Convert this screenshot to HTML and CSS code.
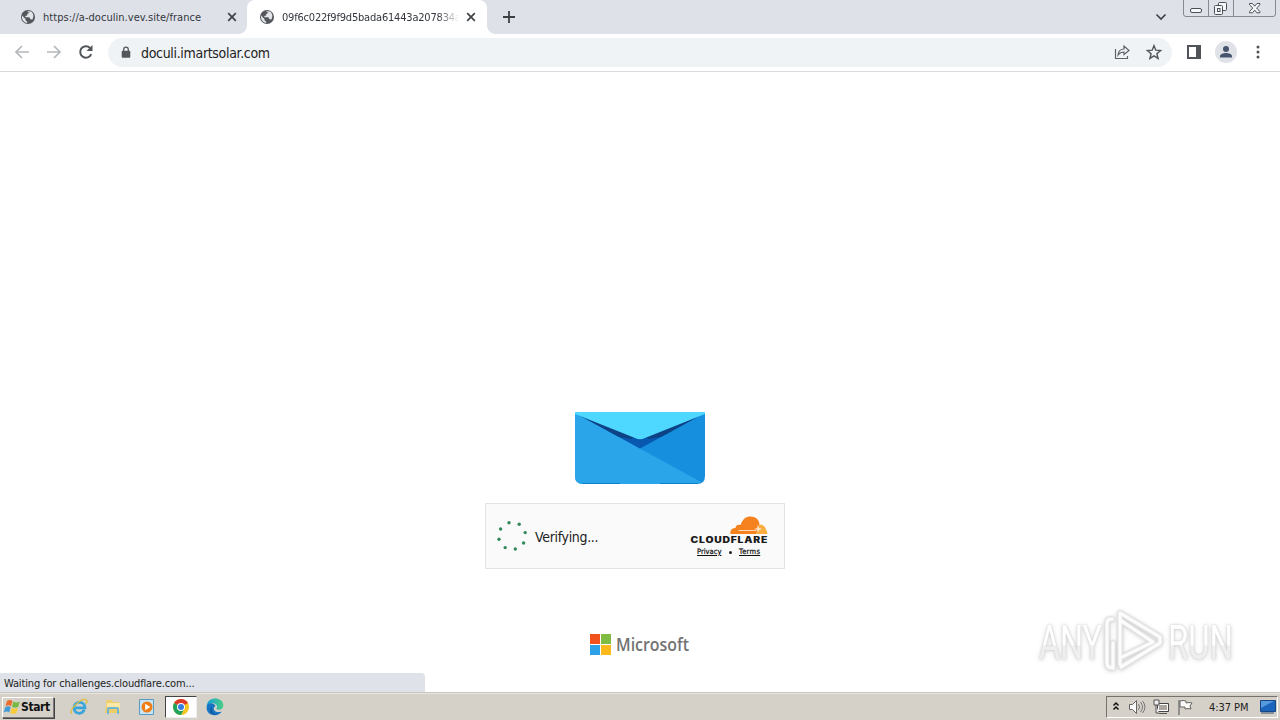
FILE: index.html
```html
<!DOCTYPE html>
<html lang="en">
<head>
<meta charset="utf-8">
<title>doculi.imartsolar.com</title>
<link rel="stylesheet" href="styles.css">
</head>
<body>
<svg class="defs" width="0" height="0" aria-hidden="true">
  <symbol id="globe" viewBox="0 0 16 16"><circle cx="8" cy="8" r="7" fill="#54585d"/><path d="M2 6.500 5.500 10v1.200l1.700 1.500v1.200C4 13.600 2 11 2 8zM7 2.200l3 .1-.8 1.800-2 .9v1.600l-2 .5.4 1.200h3.700l1.200 2 1.800.2C14.500 7 13 3.500 10.500 2.300L9 3.800z" fill="#e3e5e9"/></symbol>
  <symbol id="close" viewBox="0 0 10 10"><path d="m1.200 1.200 7.600 7.600m0-7.600L1.200 8.800" stroke="#3f4348" stroke-width="1.700"/></symbol>
</svg>
<header class="tabstrip">
  <div class="tab">
    <svg class="favicon"><use href="#globe"/></svg>
    <span class="tab-title first-title">https://a-doculin.vev.site/france</span>
    <svg class="tab-close"><use href="#close"/></svg>
  </div>
  <div class="tab active">
    <svg class="favicon"><use href="#globe"/></svg>
    <span class="tab-title faded">09f6c022f9f9d5bada61443a207834a</span>
    <svg class="tab-close"><use href="#close"/></svg>
  </div>
  <svg class="new-tab" viewBox="0 0 12 12"><path d="M6 0v12M0 6h12" stroke="#3c4043" stroke-width="1.800"/></svg>
  <svg class="tab-search" viewBox="0 0 12 8"><path d="m1.500 1.500 4.500 4.500 4.500-4.500" fill="none" stroke="#3c4043" stroke-width="1.600"/></svg>
  <svg class="window-buttons" viewBox="0 0 94 18">
    <path d="M.5 0v14q0 2.500 2.500 2.500h87q2.500 0 2.500-2.500V0M25.500 0v16M50.500 0v16" fill="none" stroke="#858991"/>
    <g fill="#f6f7f9" stroke="#4b5058"><rect x="7.500" y="8.500" width="11" height="4" rx="1.500"/><rect x="35.500" y="2.500" width="8" height="8" rx="1"/><rect x="31.500" y="5.500" width="8" height="9" rx="1"/><rect x="34.500" y="8.500" width="2.500" height="3"/><path d="M66.500 3.500h3l2.200 2.700 2.200-2.700h3v1.300L73.600 8l3.300 3.600v1.200h-3l-2.200-2.700-2.200 2.700h-3v-1.200L69.800 8l-3.300-3.200z"/></g>
  </svg>
</header>
<nav class="toolbar">
  <svg class="nav-icon" viewBox="0 0 16 16"><path d="M15 8H2m6-6L2 8l6 6" fill="none" stroke="#b5b8bb" stroke-width="1.700"/></svg>
  <svg class="nav-icon" viewBox="0 0 16 16"><path d="M1 8h13M8 2l6 6-6 6" fill="none" stroke="#b5b8bb" stroke-width="1.700"/></svg>
  <svg class="nav-icon" viewBox="0 0 16 16"><path d="M13.200 10.100A5.700 5.700 0 1 1 12 4" fill="none" stroke="#505458" stroke-width="2"/><path d="M14.500 1v6H8.500z" fill="#505458"/></svg>
  <div class="omnibox">
    <svg class="lock" viewBox="0 0 10 13"><rect x=".7" y="4.700" width="8.600" height="7" rx="1" fill="#54585d"/><path d="M2.700 5.500V3.400a2.300 2.300 0 0 1 4.600 0v2.100" fill="none" stroke="#54585d" stroke-width="1.300"/></svg>
    <span class="url">doculi.imartsolar.com</span>
    <svg class="share" viewBox="0 0 16 16"><path d="M1.500 5v9.500h12V12M4 11c.5-4 2.500-6 6-6V2l5 4.500-5 4V8c-2.800 0-4.500 1-6 3z" fill="none" stroke="#5f6368" stroke-width="1.200"/></svg>
    <svg class="star" viewBox="0 0 16 16"><path d="m8 1.700 1.800 4.500 4.800.4-3.700 3.100 1.200 4.700L8 11.900l-4.100 2.500 1.200-4.700-3.700-3.100 4.800-.4z" fill="none" stroke="#505458" stroke-width="1.400"/></svg>
  </div>
  <svg class="panel" viewBox="0 0 14 14"><path d="M1 1h12v12H1z" fill="none" stroke="#505458" stroke-width="2"/><path d="M9 1h4v12H9z" fill="#505458"/></svg>
  <svg class="avatar" viewBox="0 0 22 22"><circle cx="11" cy="11" r="11" fill="#dfe2e6"/><circle cx="11" cy="8" r="3" fill="#46546d"/><path d="M5 16.500v-1.300c0-2.200 3.500-3.200 6-3.200s6 1 6 3.200v1.300z" fill="#46546d"/></svg>
  <svg class="more" viewBox="0 0 4 14"><g fill="#505458"><circle cx="2" cy="2" r="1.500"/><circle cx="2" cy="7" r="1.500"/><circle cx="2" cy="12" r="1.500"/></g></svg>
</nav>
<main class="page">
  <svg class="envelope" viewBox="0 0 130 72">
    <path d="M0 1h130v63q0 8-8 8H8q-8 0-8-8z" fill="#178fdf"/>
    <path d="M0 1 126 70q-2 2-6 2H8q-8 0-8-8z" fill="#2ba5ea"/>
    <path d="M0 1 65 36.500 130 1z" fill="#0758ae"/>
    <path d="M1 1.500 44 25 57 27 60 24zM129 1.500 86 25l-13 2-3-3z" fill="#0d4284"/>
    <path d="M0 0h130v2L70 26q-5 2.500-10 0L0 2z" fill="#4ed8ff"/>
    <path d="M7 71.500h38m40 0h38" stroke="#0e7fca"/>
  </svg>
  <section class="challenge">
    <svg class="spinner" viewBox="0 0 30 30"><g fill="#31895a"><circle cx="12" cy="1.800" r="1.700"/><circle cx="22.200" cy="3.200" r="1.700"/><circle cx="28.200" cy="11.600" r="1.700"/><circle cx="26.600" cy="22" r="1.700"/><circle cx="18.300" cy="28" r="1.700"/><circle cx="8.200" cy="26.600" r="1.700"/><circle cx="2" cy="18.200" r="1.700"/><circle cx="3.600" cy="8" r="1.700"/></g></svg>
    <span class="verifying">Verifying...</span>
    <div class="brand">
      <svg class="cloudflare" viewBox="0 0 78 28">
        <path d="M65 18c-.3-5 1-9 4-9 4-1 7 2 7 5 1 .4 1.500 2 1.200 4z" fill="#fbad41"/>
        <path d="M40.500 18c-.6-4 1.500-6 5-6 0-3 3-4 5-3C52.500 3 56 .5 60.500.5c5 0 8.500 3 9 7.500l-4 10z" fill="#f6821f"/>
        <path d="M49 14h17.500l-1 1H48zM68 8.500l1 3.500 3.500 1-3.500 1-1 3-1-3-3-1 3-1z" fill="#fff" fill-opacity=".7"/>
        <text class="cf-word" transform="translate(.5 26.700) scale(1.220 1)" textLength="63" lengthAdjust="spacing">CLOUDFLARE</text>
      </svg>
      <div class="links"><a class="privacy">Privacy</a><i class="dot"></i><a class="terms">Terms</a></div>
    </div>
  </section>
  <div class="microsoft">
    <div class="squares"><i class="red"></i><i class="green"></i><i class="blue"></i><i class="yellow"></i></div>
    <svg class="ms-word" viewBox="0 0 74 22"><text x="0" y="17" textLength="73" lengthAdjust="spacingAndGlyphs">Microsoft</text></svg>
  </div>
  <svg class="watermark" viewBox="0 0 210 70">
    <defs><linearGradient id="sheen" x2="0" y2="1"><stop offset=".54" stop-color="#fff"/><stop offset=".56" stop-color="#efefef"/></linearGradient></defs>
    <text x="9" y="53" textLength="63" lengthAdjust="spacingAndGlyphs">ANY</text>
    <g fill="none" stroke-linejoin="round" stroke-linecap="round"><path d="M82 13q-5 0-5 4v40q0 5 6 5V37M90 58V7l40 24v6L91 61M90 14l33 22-33 16" stroke="#e8e8e8" stroke-width="5"/><path d="M82 13q-5 0-5 4v40q0 5 6 5V37M90 58V7l40 24v6L91 61M90 14l33 22-33 16" stroke="#fcfcfc" stroke-width="3"/></g>
    <text x="138" y="53" textLength="65" lengthAdjust="spacingAndGlyphs">RUN</text>
  </svg>
  <div class="status">Waiting for challenges.cloudflare.com...</div>
</main>
<footer class="taskbar">
  <button class="start"><svg class="flag" viewBox="0 0 16 16"><path d="M3 2q3-2 5.500 0L7 7.300q-2.500-2-5.500 0z" fill="#ed6c2d"/><path d="M9.300 2.500q3 2 6.500 0l-1.500 5.300q-3.500 2-6.300 0z" fill="#77b943"/><path d="M1.200 8.300q3-2 5.500 0L5.200 13.500q-2.500-2-5.500 0z" fill="#419bd6"/><path d="M7.700 8.800q3 2 6.300 0l-1.500 5.300q-3 2-6.300 0z" fill="#f8cb3c"/></svg><span>Start</span></button>
  <svg class="app ie" viewBox="0 0 18 18"><path d="M5 9.800H15C15 2.500 4 2.500 4 9.800c0 6.500 8 7.200 10.300 2" fill="none" stroke="#38a5db" stroke-width="2.700"/><path d="M2 15.500C-3 13 12-1 16.500 2q1.500 1-.8 4" fill="none" stroke="#dfbd43" stroke-width="1.300"/></svg>
  <svg class="app folder" viewBox="0 0 18 18"><path d="M2 2h6l1 2h6v11H2z" fill="#efcf70"/><path d="M3 5h13v9H3z" fill="#fae9a6"/><path d="M2 9h13l1 6H1z" fill="#edcd67"/><path d="M4 16v-5q0-1 2-1h6q2 0 2 1v5" fill="none" stroke="#70b7d7" stroke-width="2"/></svg>
  <svg class="app media" viewBox="0 0 18 18"><path d="M1.500 1.500h14v15h-14z" fill="#c8e4f5" stroke="#579ac4"/><circle cx="9" cy="9" r="5.500" fill="#f07d16"/><path d="m7.200 5.700 5 3.300-5 3.300z" fill="#fff"/></svg>
  <div class="running"><svg class="chrome" viewBox="0 0 16 16"><circle cx="8" cy="8" r="8" fill="#f7c51f"/><path d="M8 8 1.100 4a8 8 0 0 1 13.800 0z" fill="#df3b2c"/><path d="M8 8 1.100 4A8 8 0 0 0 8 16l3-5.500z" fill="#22a35b"/><circle cx="8" cy="8" r="4" fill="#fff"/><circle cx="8" cy="8" r="3" fill="#397de0"/></svg></div>
  <svg class="edge" viewBox="0 0 18 18"><defs><linearGradient id="wave"><stop stop-color="#169fd9"/><stop offset="1" stop-color="#49cf83"/></linearGradient></defs><path d="M.7 8C1.500-2 17-1.500 17.300 7c.3 5-5.700 5.500-7 4 3-4-3-9-9.600-3z" fill="url(#wave)"/><path d="M.7 8C3 4 8 5 9.500 8c-4 2-1 8 6.500 5.500C12 19 2 18.500.7 11z" fill="#1674c2"/><path d="M6 9c-1.500 5 2 8 6 7.700-6 1.200-10-4-6-7.700z" fill="#124e92"/></svg>
  <div class="tray">
    <svg class="chevrons" viewBox="0 0 8 12"><path d="m1.500 4.500 2.500-2.500 2.500 2.500M1.500 8.500 4 6l2.500 2.500" fill="none" stroke="#111" stroke-width="1.500"/></svg>
    <svg class="sound" viewBox="0 0 18 16"><path d="M1.500 5.500h3l4-4v13l-4-4h-3z" fill="#fafafa" stroke="#666"/><path d="M10.500 5q2 3 0 6m2-8q4 5 0 10m2-11q5 6 0 12" fill="none" stroke="#777"/></svg>
    <svg class="network" viewBox="0 0 16 16"><path d="M4.500 4.500h11v8h-11z" fill="#aaa69f" stroke="#444"/><path d="M5.500 5.500h9v6h-9z" fill="none" stroke="#fff"/><path d="M1 1h5v5H1zM3 6v8h3M6 14.500h8" fill="#eee" stroke="#555"/></svg>
    <svg class="tray-flag" viewBox="0 0 16 16"><path d="M2 1v15" stroke="#666" stroke-width="1.200"/><path d="M3 2q3-1 6 0v2q3-1 6 0l-2 3 1 3q-3-1-6 0V8H3z" fill="#faf9f7" stroke="#666"/></svg>
    <span class="clock">4:37 PM</span>
    <svg class="desktop" viewBox="0 0 16 14"><path d="M.5.5h15v11H.5z" fill="#1b65bd" stroke="#174783"/><path d="M1 1h13L1 8z" fill="#5599df"/><path d="M1 13h13" stroke="#85909b" stroke-width="2"/></svg>
  </div>
</footer>
</body>
</html>
```
FILE: styles.css
```css
* { box-sizing: border-box; }
body { margin: 0; width: 1280px; height: 720px; overflow: hidden; display: flex; flex-direction: column; background: #fff; color: #222; font-family: "DejaVu Sans Condensed", "DejaVu Sans", sans-serif; font-size: 11px; }
svg { display: block; flex: none; overflow: visible; }
.defs { position: absolute; }
.tabstrip { height: 34px; flex: none; display: flex; align-items: center; background: #dee1e8; }
.tab { width: 247px; height: 34px; display: flex; align-items: center; padding-left: 20px; }
.tab.active { position: relative; width: 240px; padding-left: 12px; background: #fff; border-radius: 8px 8px 0 0; }
.tab.active::before, .tab.active::after { content: ""; position: absolute; bottom: 0; width: 8px; height: 8px; }
.tab.active::before { right: 100%; background: radial-gradient(circle at 0 0, transparent 7.500px, #fff 8px); }
.tab.active::after { left: 100%; background: radial-gradient(circle at 100% 0, transparent 7.500px, #fff 8px); }
.favicon { width: 16px; height: 16px; }
.tab-title { width: 178px; margin-left: 7px; font-size: 11px; letter-spacing: .04px; white-space: nowrap; overflow: hidden; color: #33373d; }
.first-title { width: 184px; }
.faded { width: 177px; letter-spacing: -.2px; mask-image: linear-gradient(90deg, #000 88%, transparent); }
.tab-close { width: 10px; height: 10px; margin-left: 6px; }
.first-title + .tab-close { margin-left: 0; }
.active .tab-close { margin-left: 7px; }
.new-tab { width: 12px; height: 12px; margin-left: 16px; }
.tab-search { width: 12px; height: 8px; margin-left: auto; }
.window-buttons { width: 94px; height: 18px; margin: 0 3px 0 16px; align-self: flex-start; }
.toolbar { height: 38px; flex: none; display: flex; align-items: center; padding: 0 18px 1px 14px; border-bottom: 1px solid #d8dadd; }
.nav-icon { width: 16px; height: 16px; margin-right: 16px; }
.omnibox { width: 1064px; height: 29px; margin-left: -2px; padding: 0 10px 0 13px; display: flex; align-items: center; background: #f0f3f6; border-radius: 15px; }
.lock { width: 10px; height: 13px; }
.url { margin-left: 10px; padding-top: 1px; font-size: 14px; letter-spacing: -.32px; white-space: nowrap; }
.share { width: 16px; height: 16px; margin-left: auto; }
.star { width: 16px; height: 16px; margin-left: 16px; }
.panel { width: 14px; height: 14px; margin-left: 15px; }
.avatar { width: 22px; height: 22px; margin-left: 14px; }
.more { width: 4px; height: 14px; margin-left: 19px; }
.page { height: 621px; flex: none; position: relative; display: flex; flex-direction: column; align-items: center; padding-top: 340px; border-bottom: 1px solid #c9c6bf; }
.envelope { width: 130px; height: 72px; }
.challenge { width: 300px; height: 66px; margin: 19px 10px 0 0; padding: 0 16px 0 11px; display: flex; align-items: center; border: 1px solid #e3e3e3; background: #fafafa; }
.spinner { width: 30px; height: 30px; }
.verifying { margin-left: 8px; padding-top: 1px; font-size: 14px; letter-spacing: -.32px; }
.brand { margin-left: auto; width: 78px; align-self: flex-start; padding-top: 12px; }
.cloudflare { width: 78px; height: 28px; }
.cf-word { font-family: Inter, sans-serif; font-size: 8.500px; font-weight: 900; fill: #1c1c1c; }
.links { height: 16px; padding-left: 7px; display: flex; align-items: center; font-size: 7.500px; line-height: 14px; text-decoration: underline; color: #111; }
.links a { white-space: nowrap; -webkit-text-stroke: .2px #111; }
.privacy { width: 25px; }
.terms { width: 24px; letter-spacing: .3px; }
.dot { width: 3px; height: 3px; margin: 0 7px; border-radius: 50%; background: #222; }
.microsoft { margin-top: 65px; display: flex; gap: 5px; }
.squares { width: 21px; height: 21px; display: grid; grid-template-columns: 10px 10px; grid-template-rows: 10px 10px; gap: 1px; }
.red { background: #f1511b; }
.green { background: #80bc42; }
.blue { background: #2da1e8; }
.yellow { background: #fbb91b; }
.ms-word { width: 74px; height: 22px; font: 600 18px "Open Sans", sans-serif; fill: #737373; }
.watermark { position: absolute; right: 40px; top: 534px; width: 210px; height: 70px; filter: drop-shadow(0 0 1px #ccc) drop-shadow(0 1px 2px #ddd); }
.watermark text { font: 400 49px Roboto, sans-serif; fill: url(#sheen); }
.status { position: absolute; left: 0; bottom: 0; width: 425px; height: 19px; padding: 1px 0 0 4px; background: #dfe2e8; border-radius: 0 4px 0 0; line-height: 19px; font-size: 11px; letter-spacing: -.14px; }
.taskbar { height: 27px; flex: none; display: flex; align-items: center; background: #d5d0c8; border-top: 1px solid #e9e6df; }
.start { width: 52px; height: 21px; margin: 0 1px 0 2px; padding: 0 1px; display: flex; align-items: center; border: 1px solid; border-color: #fff #777 #777 #fff; box-shadow: 1px 1px #444; background: #d5d0c8; color: #111; font: bold 12px "DejaVu Sans Condensed", sans-serif; letter-spacing: -.4px; }
.flag { width: 16px; height: 16px; margin-right: 1px; }
.app { width: 18px; height: 18px; margin-right: 16px; }
.ie { margin-left: 15px; }
.running { width: 32px; height: 22px; margin-left: -7px; display: flex; align-items: center; justify-content: center; background: #fff; border: 1px solid; border-color: #444 #eee #eee #444; }
.chrome { width: 16px; height: 16px; }
.edge { width: 18px; height: 18px; margin-left: 9px; }
.tray { width: 172px; height: 22px; margin: 0 2px 0 auto; padding: 0 1px 0 5px; display: flex; align-items: center; border: 1px solid; border-color: #77736c #fff #fff #77736c; }
.chevrons { width: 8px; height: 12px; }
.sound { width: 18px; height: 16px; margin-left: 8px; }
.network { width: 16px; height: 16px; margin-left: 7px; }
.tray-flag { width: 16px; height: 16px; margin-left: 8px; }
.clock { margin-left: 16px; white-space: nowrap; font-size: 11px; letter-spacing: -.05px; }
.desktop { width: 16px; height: 14px; margin-left: auto; }
```
